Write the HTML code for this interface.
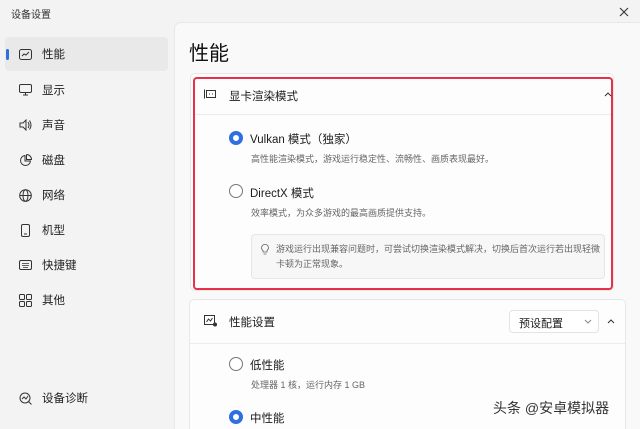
<!DOCTYPE html>
<html style="overflow:hidden;width:640px;height:429px"><head><meta charset="utf-8"><style>
*{margin:0;padding:0;box-sizing:border-box}
body{width:640px;height:429px;overflow:hidden;background:#f3f3f3;font-family:"Liberation Sans","Noto Sans CJK SC",sans-serif;color:#1b1b1b;position:relative}
.a{position:absolute}
.t{font-size:10px;color:#333}
.nav{position:absolute;left:5px;width:163px;height:34px;display:flex;align-items:center;font-size:11.5px;color:#222}
.nav svg{margin-left:14px;margin-right:10px}
.main{position:absolute;left:174px;top:22px;width:466px;height:407px;background:#f9f9f9;border-top-left-radius:7px;border-left:1px solid #e8e8e8;border-top:1px solid #e8e8e8}
.card{position:absolute;background:#fdfdfd;border:1px solid #e7e7e7;border-radius:5px}
.radio{position:absolute;width:14px;height:14px;border-radius:50%;border:1px solid #777;background:#fff}
.radio.on{border:4px solid #2f6fe0}
.lbl{position:absolute;font-size:11.5px;color:#1b1b1b}
.sub{position:absolute;font-size:9px;color:#666}
</style></head><body>
<div class="a t" style="left:11px;top:6px">设备设置</div>
<svg class="a" style="left:619px;top:7px" width="10" height="10"><path d="M1 1L9 9M9 1L1 9" stroke="#333" stroke-width="1.1"/></svg>

<div class="nav" style="top:37px;background:#e9e9e9;border-radius:4px"><div class="a" style="left:1px;top:12px;width:3px;height:11px;background:#2f6fe0;border-radius:2px"></div><svg width="13" height="11"><rect x=".5" y=".5" width="12" height="10" rx="2" fill="none" stroke="#333"/><path d="M3 7L5 5L7 6L10 3" stroke="#333" fill="none"/></svg>性能</div>
<div class="nav" style="top:73px"><svg width="13" height="12"><rect x=".5" y=".5" width="12" height="8" rx="1.5" fill="none" stroke="#333"/><path d="M4 11H9M6.5 9V11" stroke="#333"/></svg>显示</div>
<div class="nav" style="top:108px"><svg width="13" height="12"><path d="M1 4H4L7 1V11L4 8H1Z M9 3Q11 6 9 9 M10.5 1.5Q13.5 6 10.5 10.5" stroke="#333" fill="none"/></svg>声音</div>
<div class="nav" style="top:143px"><svg width="13" height="13"><path d="M6 1.5A5 5 0 1 0 11.5 7H6Z M7.5 .5V5.5H12.5A5 5 0 0 0 7.5 .5" stroke="#333" fill="none"/></svg>磁盘</div>
<div class="nav" style="top:178px"><svg width="13" height="13"><circle cx="6.5" cy="6.5" r="5.8" stroke="#333" fill="none"/><ellipse cx="6.5" cy="6.5" rx="2.5" ry="5.8" stroke="#333" fill="none"/><path d="M.7 6.5H12.3" stroke="#333"/></svg>网络</div>
<div class="nav" style="top:213px"><svg width="13" height="13"><rect x="2.5" y=".5" width="8" height="12" rx="1.5" stroke="#333" fill="none"/><path d="M5 10H8" stroke="#333"/></svg>机型</div>
<div class="nav" style="top:248px"><svg width="13" height="12"><rect x=".5" y="1.5" width="12" height="9" rx="1.5" stroke="#333" fill="none"/><path d="M3 4.5H10M3 6.5H10M4 8.5H9" stroke="#333" stroke-width=".8"/></svg>快捷键</div>
<div class="nav" style="top:283px"><svg width="13" height="13"><rect x=".5" y=".5" width="5" height="5" rx="1" stroke="#333" fill="none"/><rect x="7.5" y=".5" width="5" height="5" rx="1" stroke="#333" fill="none"/><rect x=".5" y="7.5" width="5" height="5" rx="1" stroke="#333" fill="none"/><rect x="7.5" y="7.5" width="5" height="5" rx="1" stroke="#333" fill="none"/></svg>其他</div>
<div class="nav" style="top:381px"><svg width="13" height="13"><circle cx="6" cy="6" r="5" stroke="#333" fill="none"/><path d="M3 7L5 5L7 7L9 4M9.5 9.5L12.5 12.5" stroke="#333" fill="none"/></svg>设备诊断</div>

<div class="main"></div>
<div class="a" style="left:189px;top:37px;font-size:20px;color:#111">性能</div>

<div class="card" style="left:190px;top:73px;width:424px;height:218px"></div>
<div class="a" style="left:193px;top:77px;width:420px;height:213px;border:2px solid #e8304a;border-radius:4px"></div>
<div class="a" style="left:195px;top:79px;width:416px;height:36px;border-bottom:1px solid #ececec"></div>
<svg class="a" style="left:204px;top:89px" width="12" height="10"><path d="M.5 .5V9.5" stroke="#333"/><rect x="2.5" y="1.5" width="9" height="7" stroke="#333" fill="none"/><path d="M5 5H6M8 5H9" stroke="#333"/></svg>
<div class="lbl" style="left:229px;top:88px">显卡渲染模式</div>
<svg class="a" style="left:604px;top:91px" width="8" height="6"><path d="M1 5L4 2L7 5" stroke="#333" fill="none"/></svg>

<div class="radio on" style="left:229px;top:131px"></div>
<div class="lbl" style="left:250px;top:131px">Vulkan 模式（独家）</div>
<div class="sub" style="left:251px;top:152px">高性能渲染模式，游戏运行稳定性、流畅性、画质表现最好。</div>
<div class="radio" style="left:229px;top:184px"></div>
<div class="lbl" style="left:250px;top:185px">DirectX 模式</div>
<div class="sub" style="left:251px;top:206px">效率模式，为众多游戏的最高画质提供支持。</div>
<div class="a" style="left:251px;top:234px;width:354px;height:45px;background:#f7f7f7;border:1px solid #e6e6e6;border-radius:4px"></div>
<svg class="a" style="left:261px;top:244px" width="8" height="11"><path d="M4 .5A3.3 3.3 0 0 0 2 6.5V8H6V6.5A3.3 3.3 0 0 0 4 .5ZM2.5 10H5.5" stroke="#666" fill="none" stroke-width=".8"/></svg>
<div class="sub" style="left:276px;top:242px;width:330px;line-height:15px">游戏运行出现兼容问题时，可尝试切换渲染模式解决，切换后首次运行若出现轻微卡顿为正常现象。</div>

<div class="card" style="left:189px;top:299px;width:437px;height:130px;border-bottom:none;border-bottom-left-radius:0;border-bottom-right-radius:0"></div>
<div class="a" style="left:190px;top:343px;width:435px;border-top:1px solid #ececec"></div>
<svg class="a" style="left:204px;top:315px" width="13" height="12"><rect x=".5" y=".5" width="10" height="9" stroke="#333" fill="none"/><path d="M2.5 7L4.5 4L6.5 6L8.5 3" stroke="#333" fill="none"/><circle cx="11" cy="9.5" r="2" fill="#333"/></svg>
<div class="lbl" style="left:229px;top:314px">性能设置</div>
<div class="a" style="left:509px;top:310px;width:90px;height:23px;background:#fff;border:1px solid #e3e3e3;border-radius:4px;font-size:11px;padding:4px 0 0 9px">预设配置</div>
<svg class="a" style="left:584px;top:319px" width="8" height="5"><path d="M1 1L4 4L7 1" stroke="#888" fill="none"/></svg>
<svg class="a" style="left:607px;top:318px" width="8" height="6"><path d="M1 5L4 2L7 5" stroke="#333" fill="none"/></svg>

<div class="radio" style="left:229px;top:357px"></div>
<div class="lbl" style="left:250px;top:357px">低性能</div>
<div class="sub" style="left:251px;top:378px">处理器 1 核，运行内存 1 GB</div>
<div class="radio on" style="left:229px;top:410px"></div>
<div class="lbl" style="left:250px;top:410px">中性能</div>
<div class="a" style="left:493px;top:398px;font-size:14px;color:#333;text-shadow:0 0 2px #fff,0 0 1px #fff">头条 @安卓模拟器</div>
</body></html>
